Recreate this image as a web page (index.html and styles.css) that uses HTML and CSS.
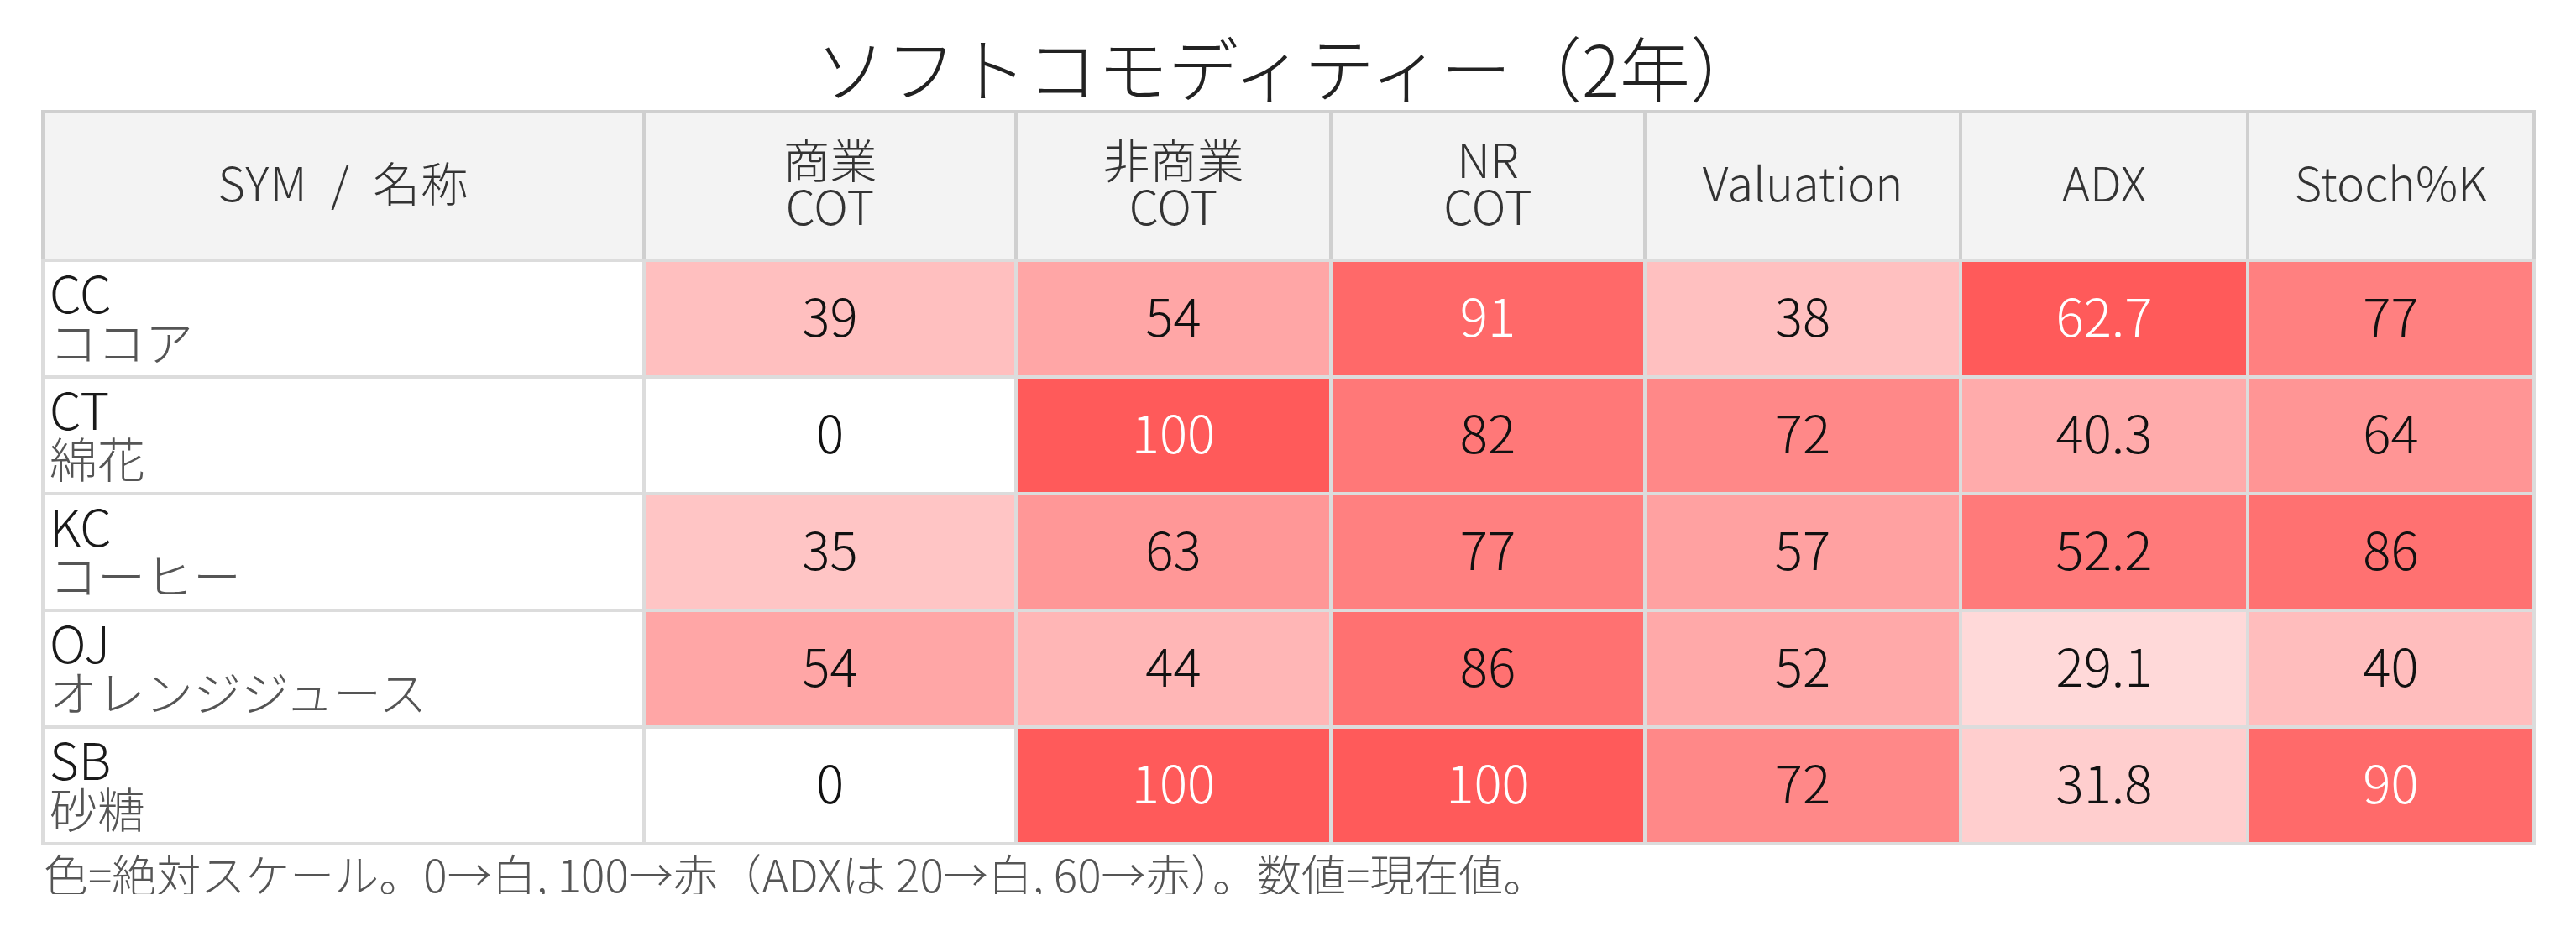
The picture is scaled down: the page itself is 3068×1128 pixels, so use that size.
FILE: index.html
```html
<!DOCTYPE html>
<html lang="ja">
<head>
<meta charset="utf-8">
<title>ソフトコモディティー（2年）</title>
<link rel="stylesheet" href="styles.css">
</head>
<body>
<div class="wrap">
  <h1 class="title">ソフトコモディティー（2年）</h1>
  <table class="grid">
    <colgroup>
      <col class="c-sym">
      <col class="c-com">
      <col class="c-non">
      <col class="c-nr">
      <col class="c-val">
      <col class="c-adx">
      <col class="c-sto">
    </colgroup>
    <thead>
      <tr>
        <th class="h-sym">SYM / 名称</th>
        <th>商業<br>COT</th>
        <th>非商業<br>COT</th>
        <th>NR<br>COT</th>
        <th>Valuation</th>
        <th>ADX</th>
        <th>Stoch%K</th>
      </tr>
    </thead>
    <tbody>
      <tr>
        <td class="sym"><div class="code">CC</div><div class="name">ココア</div></td>
        <td class="num" style="background:#ffbfbf">39</td>
        <td class="num" style="background:#ffa6a6">54</td>
        <td class="num hot" style="background:#ff6969">91</td>
        <td class="num" style="background:#ffc0c0">38</td>
        <td class="num hot" style="background:#ff5a5a">62.7</td>
        <td class="num" style="background:#ff8080">77</td>
      </tr>
      <tr>
        <td class="sym"><div class="code">CT</div><div class="name">綿花</div></td>
        <td class="num" style="background:#ffffff">0</td>
        <td class="num hot" style="background:#ff5a5a">100</td>
        <td class="num" style="background:#ff7878">82</td>
        <td class="num" style="background:#ff8888">72</td>
        <td class="num" style="background:#ffabab">40.3</td>
        <td class="num" style="background:#ff9595">64</td>
      </tr>
      <tr>
        <td class="sym"><div class="code">KC</div><div class="name">コーヒー</div></td>
        <td class="num" style="background:#ffc5c5">35</td>
        <td class="num" style="background:#ff9797">63</td>
        <td class="num" style="background:#ff8080">77</td>
        <td class="num" style="background:#ffa1a1">57</td>
        <td class="num" style="background:#ff7a7a">52.2</td>
        <td class="num" style="background:#ff7171">86</td>
      </tr>
      <tr>
        <td class="sym"><div class="code">OJ</div><div class="name">オレンジジュース</div></td>
        <td class="num" style="background:#ffa6a6">54</td>
        <td class="num" style="background:#ffb6b6">44</td>
        <td class="num" style="background:#ff7171">86</td>
        <td class="num" style="background:#ffa9a9">52</td>
        <td class="num" style="background:#ffd9d9">29.1</td>
        <td class="num" style="background:#ffbdbd">40</td>
      </tr>
      <tr>
        <td class="sym"><div class="code">SB</div><div class="name">砂糖</div></td>
        <td class="num" style="background:#ffffff">0</td>
        <td class="num hot" style="background:#ff5a5a">100</td>
        <td class="num hot" style="background:#ff5a5a">100</td>
        <td class="num" style="background:#ff8888">72</td>
        <td class="num" style="background:#ffcece">31.8</td>
        <td class="num hot" style="background:#ff6a6a">90</td>
      </tr>
    </tbody>
  </table>
  <p class="note">色=絶対スケール。0→白, 100→赤（ADXは 20→白, 60→赤）。数値=現在値。</p>
</div>
</body>
</html>
```

FILE: styles.css
```css
html, body {
  margin: 0;
  padding: 0;
  background: #ffffff;
}

body {
  font-family: "Noto Sans CJK JP", "Noto Sans", sans-serif;
  font-weight: 300;
  color: #222222;
}

.wrap {
  width: 2970px;
  margin-left: 49px;
  padding-top: 37px;
}

.title {
  margin: 0 0 10px 0;
  text-align: center;
  font-size: 84px;
  line-height: 84px;
  font-weight: 300;
  color: #222222;
}

.grid {
  width: 2970px;
  table-layout: fixed;
  border-collapse: collapse;
}

.c-sym { width: 716px; }
.c-com { width: 443px; }
.c-non { width: 375px; }
.c-nr  { width: 374px; }
.c-val { width: 376px; }
.c-adx { width: 342px; }
.c-sto { width: 341px; }

.grid th {
  background: #f3f3f3;
  border: 4px solid #cfcfcf;
  border-bottom-color: #dcdcdc;
  padding: 25px 8px 36px;
  font-size: 56px;
  line-height: 56px;
  font-weight: 300;
  color: #333333;
  text-align: center;
  vertical-align: middle;
}

.grid th.h-sym {
  word-spacing: 14px;
  letter-spacing: 1px;
}

.grid td {
  border: 4px solid #dcdcdc;
  vertical-align: middle;
}

.sym {
  padding: 5px 6px 14px;
  text-align: left;
  background: #ffffff;
}

.code {
  font-size: 60px;
  line-height: 60px;
  color: #1a1a1a;
}

.name {
  font-size: 57px;
  line-height: 56px;
  color: #555555;
}

.num {
  padding: 0 8px 12px;
  text-align: center;
  font-size: 62px;
  line-height: 62px;
  color: #111111;
}

.num.hot {
  color: #ffffff;
}

.note {
  margin: 8px 0 0 3px;
  font-size: 53px;
  line-height: 50px;
  color: #555555;
}
```
